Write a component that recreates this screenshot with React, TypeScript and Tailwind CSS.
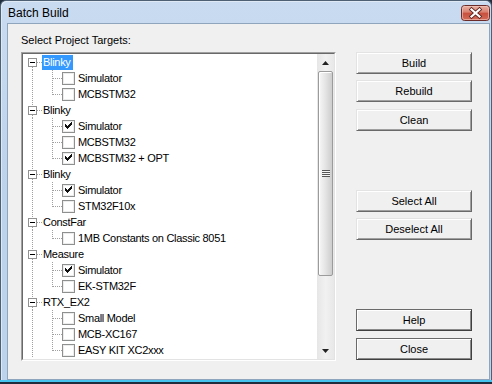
import React from "react";

type Group = { name: string; selected?: boolean; items: [string, boolean][] };

const groups: Group[] = [
  { name: "Blinky", selected: true, items: [["Simulator", false], ["MCBSTM32", false]] },
  { name: "Blinky", items: [["Simulator", true], ["MCBSTM32", false], ["MCBSTM32 + OPT", true]] },
  { name: "Blinky", items: [["Simulator", true], ["STM32F10x", false]] },
  { name: "ConstFar", items: [["1MB Constants on Classic 8051", false]] },
  { name: "Measure", items: [["Simulator", true], ["EK-STM32F", false]] },
  { name: "RTX_EX2", items: [["Small Model", false], ["MCB-XC167", false], ["EASY KIT XC2xxx", false]] },
];

const DOT = { stroke: "#a0a0a0", strokeDasharray: "1 1" };

function RootRow({ name, first, selected }: { name: string; first: boolean; selected?: boolean }) {
  return (
    <div className="flex h-[16px] items-center">
      <svg width="19" height="16" className="shrink-0" shapeRendering="crispEdges">
        {!first && <line x1="9.5" y1="0" x2="9.5" y2="4" {...DOT} />}
        <line x1="9.5" y1="13" x2="9.5" y2="16" {...DOT} />
        <line x1="14" y1="8.5" x2="19" y2="8.5" {...DOT} />
        <rect x="5.5" y="4.5" width="8" height="8" fill="#fff" stroke="#919191" />
        <line x1="7" y1="8.5" x2="12" y2="8.5" stroke="#000" />
      </svg>
      <span
        className={
          selected
            ? "h-[15px] bg-[#3399ff] pl-[1px] pr-[2px] text-[11px] leading-[15px] tracking-[-0.3px] text-white"
            : "pl-[1px] text-[11px] leading-[16px] tracking-[-0.3px] text-black"
        }
      >
        {name}
      </span>
    </div>
  );
}

const CHECK: [number, number][] = [
  [42, 7],
  [43, 8],
  [44, 9],
  [45, 8],
  [46, 7],
  [47, 6],
  [48, 5],
];

function ChildRow({ label, checked, last }: { label: string; checked: boolean; last: boolean }) {
  return (
    <div className="flex h-[16px] items-center">
      <svg width="55" height="16" className="shrink-0" shapeRendering="crispEdges">
        <line x1="9.5" y1="0" x2="9.5" y2="16" {...DOT} />
        <line x1="29.5" y1="0" x2="29.5" y2={last ? 9 : 16} {...DOT} />
        <line x1="30" y1="8.5" x2="39" y2="8.5" {...DOT} />
        <rect x="39.5" y="2.5" width="12" height="12" fill="#fff" stroke="#8e8f8f" />
        <rect x="40.5" y="3.5" width="10" height="10" fill="none" stroke="#ececec" />
        {checked &&
          CHECK.map(([x, y]) => <rect key={x} x={x} y={y - 1} width="1" height="3" fill="#111" />)}
      </svg>
      <span className="text-[11px] leading-[16px] tracking-[-0.3px] text-black whitespace-nowrap">{label}</span>
    </div>
  );
}

function Btn({ children, className = "", dark }: { children: React.ReactNode; className?: string; dark?: boolean }) {
  return (
    <div
      className={
        "flex h-[22px] w-[116px] items-center justify-center bg-[#f0f0f0] text-[11px] text-black " +
        (dark
          ? "border border-t-[#6a6a6a] border-l-[#6a6a6a] border-r-[#404040] border-b-[#404040] shadow-[inset_1px_1px_0_#fff,inset_-1px_-1px_0_#8a8a8a] "
          : "border border-t-[#e3e3e3] border-l-[#e3e3e3] border-r-[#696969] border-b-[#696969] shadow-[inset_1px_1px_0_#fff,inset_-1px_-1px_0_#a0a0a0] ") +
        className
      }
    >
      {children}
    </div>
  );
}

function CloseButton() {
  return (
    <svg width="29" height="16" className="shrink-0">
      <defs>
        <linearGradient id="cg" x1="0" y1="0" x2="0" y2="1">
          <stop offset="0" stopColor="#eab3a6" />
          <stop offset="0.45" stopColor="#d9806f" />
          <stop offset="0.5" stopColor="#c74f3d" />
          <stop offset="1" stopColor="#d46d5c" />
        </linearGradient>
      </defs>
      <rect x="0.5" y="0.5" width="28" height="15" rx="3" fill="url(#cg)" stroke="#6b2b28" />
      <rect x="1.5" y="1.5" width="26" height="13" rx="2" fill="none" stroke="#f3c9bf" strokeOpacity="0.6" />
      <path d="M10.5 4.5 L18.5 11.5 M18.5 4.5 L10.5 11.5" stroke="#5b2420" strokeWidth="3.8" strokeLinecap="square" />
      <path d="M10.5 4.5 L18.5 11.5 M18.5 4.5 L10.5 11.5" stroke="#fff" strokeWidth="2.2" strokeLinecap="square" />
    </svg>
  );
}

export default function App() {
  const rows: React.ReactNode[] = [];
  groups.forEach((g, gi) => {
    rows.push(<RootRow key={"r" + gi} name={g.name} first={gi === 0} selected={g.selected} />);
    g.items.forEach(([label, checked], ii) => {
      rows.push(<ChildRow key={"c" + gi + "-" + ii} label={label} checked={checked} last={ii === g.items.length - 1} />);
    });
  });

  return (
    <div className="flex h-[384px] w-[492px] flex-col overflow-hidden bg-[#1f2d3c] font-['Liberation_Sans',Arial,sans-serif]">
      <div className="flex h-[380px] flex-col rounded-t-[6px] border-l border-r border-t border-[#4e6074] bg-gradient-to-b from-[#c9dbf0] via-[#bdd3eb] to-[#bcd3eb] shadow-[inset_1px_1px_0_#dfe9f5]">
        <div className="flex h-[22px] items-start justify-between pl-[7px] pr-[1px]">
          <span className="mt-[4px] text-[12px] leading-[16px] text-black">Batch Build</span>
          <div className="mt-[4px]">
            <CloseButton />
          </div>
        </div>
        <div className="ml-[6px] mr-[1px] flex flex-1 border border-[#8fa5bd] bg-[#f0f0f0] pl-[13px] pt-[10px]">
          <div className="flex w-[315px] flex-col">
            <div className="mb-[5px] h-[13px] text-[11px] leading-[13px] text-black">Select Project Targets:</div>
            <div className="flex h-[309px] border border-t-[#a0a0a0] border-l-[#a0a0a0] border-r-white border-b-white">
              <div className="flex flex-1 border border-t-[#696969] border-l-[#696969] border-r-[#e3e3e3] border-b-[#e3e3e3] bg-white">
                <div className="flex-1 overflow-hidden">{rows}</div>
                <div className="flex w-[17px] flex-col bg-gradient-to-r from-[#e6e6e6] via-[#f1f1f1] to-[#e8e8e8]">
                  <div className="flex h-[17px] items-center justify-center">
                    <svg width="7" height="4">
                      <polygon points="0,4 3.5,0 7,4" fill="#222" />
                    </svg>
                  </div>
                  <div className="mx-[1px] flex h-[205px] items-center justify-center rounded-[2px] border border-[#9b9b9b] bg-gradient-to-r from-[#f7f7f7] via-[#e4e4e4] to-[#cdcdcd] shadow-[inset_1px_1px_0_#fff]">
                    <svg width="8" height="8" shapeRendering="crispEdges">
                      <line x1="0" y1="0.5" x2="8" y2="0.5" stroke="#555" />
                      <line x1="0" y1="2.5" x2="8" y2="2.5" stroke="#555" />
                      <line x1="0" y1="4.5" x2="8" y2="4.5" stroke="#555" />
                      <line x1="0" y1="6.5" x2="8" y2="6.5" stroke="#555" />
                      <line x1="0" y1="1.5" x2="8" y2="1.5" stroke="#f4f4f4" />
                      <line x1="0" y1="3.5" x2="8" y2="3.5" stroke="#f4f4f4" />
                      <line x1="0" y1="5.5" x2="8" y2="5.5" stroke="#f4f4f4" />
                    </svg>
                  </div>
                  <div className="flex-1" />
                  <div className="flex h-[17px] items-center justify-center">
                    <svg width="7" height="4">
                      <polygon points="0,0 7,0 3.5,4" fill="#222" />
                    </svg>
                  </div>
                </div>
              </div>
            </div>
          </div>
          <div className="ml-[20px] flex flex-col pt-[18px]">
            <Btn>Build</Btn>
            <Btn className="mt-[6px]">Rebuild</Btn>
            <Btn className="mt-[7px]">Clean</Btn>
            <Btn className="mt-[59px]">Select All</Btn>
            <Btn className="mt-[6px]">Deselect All</Btn>
            <Btn className="mt-[69px]" dark>
              Help
            </Btn>
            <Btn className="mt-[7px]" dark>
              Close
            </Btn>
          </div>
        </div>
      </div>
      <div className="h-[2px] bg-[#45c4ef]" />
      <div className="h-[2px] bg-[#1f2d3c]" />
    </div>
  );
}
